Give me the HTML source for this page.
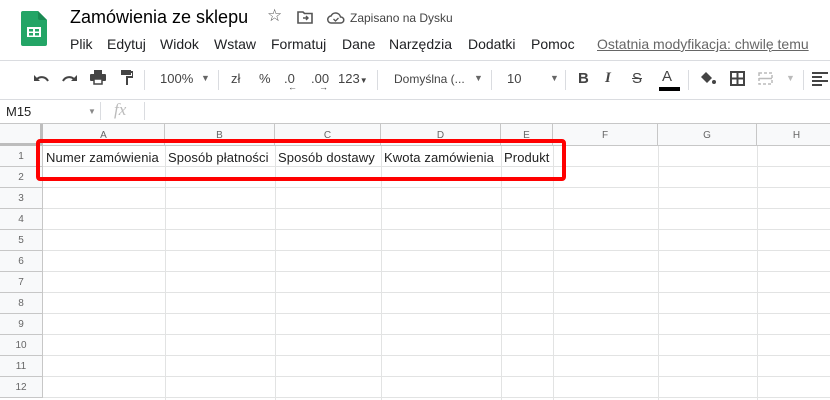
<!DOCTYPE html>
<html><head><meta charset="utf-8"><style>
*{margin:0;padding:0;box-sizing:border-box}
body{width:830px;height:400px;overflow:hidden;background:#fff;font-family:"Liberation Sans",Arial,sans-serif;position:relative;color:#202124}
.a{position:absolute;white-space:nowrap}
.m{position:absolute;top:36px;font-size:14px;color:#202124;white-space:nowrap}
.tb{font-size:13px;color:#444}
.sep{position:absolute;width:1px;background:#dadce0}
.ch{position:absolute;top:124px;height:22px;border-right:1px solid #c7c7c7;font-size:10px;color:#666;text-align:center;line-height:24px;background:#f8f9fa}
.rh{position:absolute;left:0;width:43px;height:21px;border-bottom:1px solid #c7c7c7;border-right:1px solid #c7c7c7;background:#f8f9fa;font-size:10px;color:#666;text-align:center;line-height:21px}
.hl{position:absolute;left:43px;right:0;height:1px;background:#e2e3e3}
.vl{position:absolute;top:146px;bottom:0;width:1px;background:#e2e3e3}
.c{position:absolute;top:147px;font-size:13px;line-height:21px;color:#222;letter-spacing:0.1px}
</style></head><body>
<svg class="a" style="left:21px;top:11px" width="26" height="35" viewBox="0 0 26 35"><path d="M2 0h15l9 9v24a2 2 0 0 1-2 2H2a2 2 0 0 1-2-2V2a2 2 0 0 1 2-2z" fill="#23a566"/><path d="M17 0l9 9h-7a2 2 0 0 1-2-2z" fill="#1a8a53"/><rect x="6" y="16" width="14" height="10" fill="#fff"/><rect x="8" y="18" width="4" height="2.5" fill="#23a566"/><rect x="14" y="18" width="4" height="2.5" fill="#23a566"/><rect x="8" y="22" width="4" height="2.5" fill="#23a566"/><rect x="14" y="22" width="4" height="2.5" fill="#23a566"/></svg>
<div class="a" style="left:70px;top:7px;font-size:18px;color:#000">Zamówienia ze sklepu</div>
<div class="a" style="left:267px;top:6px;font-size:17px;color:#555">☆</div>
<svg class="a" style="left:297px;top:10px" width="16" height="14" viewBox="0 0 16 14"><path d="M1 2h5l1.5 1.5H15V13H1z" fill="none" stroke="#555" stroke-width="1.6"/><path d="M6 8h5M9 6l2 2-2 2" stroke="#555" stroke-width="1.4" fill="none"/></svg>
<svg class="a" style="left:327px;top:11px" width="18" height="13" viewBox="0 0 18 13"><path d="M4.5 12a3.5 3.5 0 0 1-.5-7 5 5 0 0 1 9.5 1A3 3 0 0 1 14 12z" fill="none" stroke="#555" stroke-width="1.5"/><path d="M6.5 8l2 2 3-3" stroke="#555" stroke-width="1.3" fill="none"/></svg>
<div class="a" style="left:350px;top:11px;font-size:12px;color:#444">Zapisano na Dysku</div>
<div class="m" style="left:70px">Plik</div>
<div class="m" style="left:107px">Edytuj</div>
<div class="m" style="left:160px">Widok</div>
<div class="m" style="left:214px">Wstaw</div>
<div class="m" style="left:271px">Formatuj</div>
<div class="m" style="left:342px">Dane</div>
<div class="m" style="left:389px">Narzędzia</div>
<div class="m" style="left:468px">Dodatki</div>
<div class="m" style="left:531px">Pomoc</div>
<div class="a" style="left:597px;top:36px;font-size:14px;color:#666;text-decoration:underline">Ostatnia modyfikacja: chwilę temu</div>
<div class="a" style="left:0;top:60px;width:830px;height:1px;background:#dadce0"></div>
<svg class="a" style="left:33px;top:72px" width="16" height="12" viewBox="0 0 16 12"><path d="M4 7a7 7 0 0 1 11 2" stroke="#444" stroke-width="2" fill="none"/><path d="M1 3v6h6z" fill="#444"/></svg>
<svg class="a" style="left:62px;top:72px" width="16" height="12" viewBox="0 0 16 12"><path d="M12 7a7 7 0 0 0-11 2" stroke="#444" stroke-width="2" fill="none"/><path d="M15 3v6H9z" fill="#444"/></svg>
<svg class="a" style="left:90px;top:70px" width="16" height="15" viewBox="0 0 16 15"><rect x="4" y="0" width="8" height="4" fill="#444"/><rect x="0" y="4" width="16" height="7" rx="1" fill="#444"/><rect x="4" y="9" width="8" height="5" fill="#fff" stroke="#444" stroke-width="1.5"/></svg>
<svg class="a" style="left:121px;top:70px" width="12" height="16" viewBox="0 0 12 16"><rect x="0" y="0" width="10" height="5" fill="#444"/><path d="M10 2h2v5H6v8" stroke="#444" stroke-width="2" fill="none"/></svg>
<div class="sep" style="left:144px;top:70px;height:20px"></div>
<div class="a tb" style="left:160px;top:71px">100%</div>
<div class="a" style="left:201px;top:73px;font-size:9px;color:#666">▼</div>
<div class="sep" style="left:218px;top:70px;height:20px"></div>
<div class="a tb" style="left:231px;top:71px">zł</div>
<div class="a tb" style="left:259px;top:71px">%</div>
<div class="a tb" style="left:284px;top:71px">.0</div>
<div class="a tb" style="left:311px;top:71px">.00</div>
<div class="a" style="left:288px;top:82px;font-size:9px;color:#444">←</div>
<div class="a" style="left:319px;top:82px;font-size:9px;color:#444">→</div>
<div class="a tb" style="left:338px;top:71px">123<span style="font-size:8px">▼</span></div>
<div class="sep" style="left:377px;top:70px;height:20px"></div>
<div class="a" style="left:394px;top:72px;font-size:12px;color:#444">Domyślna (...</div>
<div class="a" style="left:474px;top:73px;font-size:9px;color:#666">▼</div>
<div class="sep" style="left:491px;top:70px;height:20px"></div>
<div class="a tb" style="left:507px;top:71px">10</div>
<div class="a" style="left:550px;top:73px;font-size:9px;color:#666">▼</div>
<div class="sep" style="left:565px;top:70px;height:20px"></div>
<div class="a" style="left:578px;top:70px;font-size:15px;font-weight:bold;color:#444">B</div>
<div class="a" style="left:605px;top:70px;font-size:15px;font-style:italic;color:#444;font-family:'Liberation Serif',serif;font-weight:bold">I</div>
<div class="a" style="left:632px;top:70px;font-size:15px;color:#444;text-decoration:line-through">S</div>
<div class="a" style="left:662px;top:68px;font-size:15px;color:#444">A</div>
<div class="a" style="left:659px;top:87px;width:21px;height:4px;background:#000"></div>
<div class="sep" style="left:688px;top:70px;height:20px"></div>
<svg class="a" style="left:699px;top:71px" width="18" height="15" viewBox="0 0 18 15"><path d="M7 1l6 6-5 5-6-6z" fill="#444"/><circle cx="15" cy="11" r="2" fill="#444"/></svg>
<svg class="a" style="left:730px;top:71px" width="15" height="15" viewBox="0 0 15 15"><rect x="1" y="1" width="13" height="13" fill="none" stroke="#444" stroke-width="2"/><path d="M7.5 1v13M1 7.5h13" stroke="#444" stroke-width="2"/></svg>
<svg class="a" style="left:758px;top:72px" width="15" height="13" viewBox="0 0 15 13"><rect x="1" y="1" width="13" height="11" fill="none" stroke="#bbb" stroke-width="1.5" stroke-dasharray="3 2"/><path d="M1 6.5h13" stroke="#bbb" stroke-width="1.5"/></svg>
<div class="a" style="left:786px;top:73px;font-size:9px;color:#bbb">▼</div>
<div class="sep" style="left:803px;top:70px;height:20px"></div>
<svg class="a" style="left:812px;top:72px" width="16" height="14" viewBox="0 0 16 14"><path d="M0 1h16M0 5h10M0 9h16M0 13h10" stroke="#444" stroke-width="2"/></svg>
<div class="a" style="left:0;top:99px;width:830px;height:1px;background:#dadce0"></div>
<div class="a" style="left:6px;top:104px;font-size:13px;color:#222">M15</div>
<div class="a" style="left:88px;top:107px;font-size:8px;color:#888">▼</div>
<div class="sep" style="left:100px;top:102px;height:18px"></div>
<div class="a" style="left:114px;top:100px;font-size:17px;font-style:italic;color:#bbb;font-family:'Liberation Serif',serif">fx</div>
<div class="sep" style="left:144px;top:102px;height:18px"></div>
<div class="a" style="left:0;top:123px;width:830px;height:1px;background:#c7c7c7"></div>
<div class="ch" style="left:0;width:43px"></div>
<div class="ch" style="left:43px;width:122px">A</div>
<div class="ch" style="left:165px;width:110px">B</div>
<div class="ch" style="left:275px;width:106px">C</div>
<div class="ch" style="left:381px;width:120px">D</div>
<div class="ch" style="left:501px;width:52px">E</div>
<div class="ch" style="left:553px;width:105px">F</div>
<div class="ch" style="left:658px;width:99px">G</div>
<div class="ch" style="left:757px;width:80px">H</div>
<div class="a" style="left:0;top:145px;width:830px;height:1px;background:#c7c7c7"></div>
<div class="a" style="left:0;top:143px;width:43px;height:3px;background:#bdbdbd"></div>
<div class="a" style="left:40px;top:124px;width:3px;height:22px;background:#bdbdbd"></div>
<div class="vl" style="left:165px"></div><div class="vl" style="left:275px"></div><div class="vl" style="left:381px"></div><div class="vl" style="left:501px"></div><div class="vl" style="left:553px"></div><div class="vl" style="left:658px"></div><div class="vl" style="left:757px"></div>
<div class="hl" style="top:166px"></div><div class="hl" style="top:187px"></div><div class="hl" style="top:208px"></div><div class="hl" style="top:229px"></div><div class="hl" style="top:250px"></div><div class="hl" style="top:271px"></div><div class="hl" style="top:292px"></div><div class="hl" style="top:313px"></div><div class="hl" style="top:334px"></div><div class="hl" style="top:355px"></div><div class="hl" style="top:376px"></div><div class="hl" style="top:397px"></div>
<div class="rh" style="top:146px">1</div><div class="rh" style="top:167px">2</div><div class="rh" style="top:188px">3</div><div class="rh" style="top:209px">4</div><div class="rh" style="top:230px">5</div><div class="rh" style="top:251px">6</div><div class="rh" style="top:272px">7</div><div class="rh" style="top:293px">8</div><div class="rh" style="top:314px">9</div><div class="rh" style="top:335px">10</div><div class="rh" style="top:356px">11</div><div class="rh" style="top:377px">12</div>
<div class="c" style="left:46px">Numer zamówienia</div>
<div class="c" style="left:168px">Sposób płatności</div>
<div class="c" style="left:278px">Sposób dostawy</div>
<div class="c" style="left:384px">Kwota zamówienia</div>
<div class="c" style="left:504px">Produkt</div>
<div class="a" style="left:36px;top:139px;width:530px;height:42px;border:4px solid #f00;border-radius:4px"></div>
</body></html>
